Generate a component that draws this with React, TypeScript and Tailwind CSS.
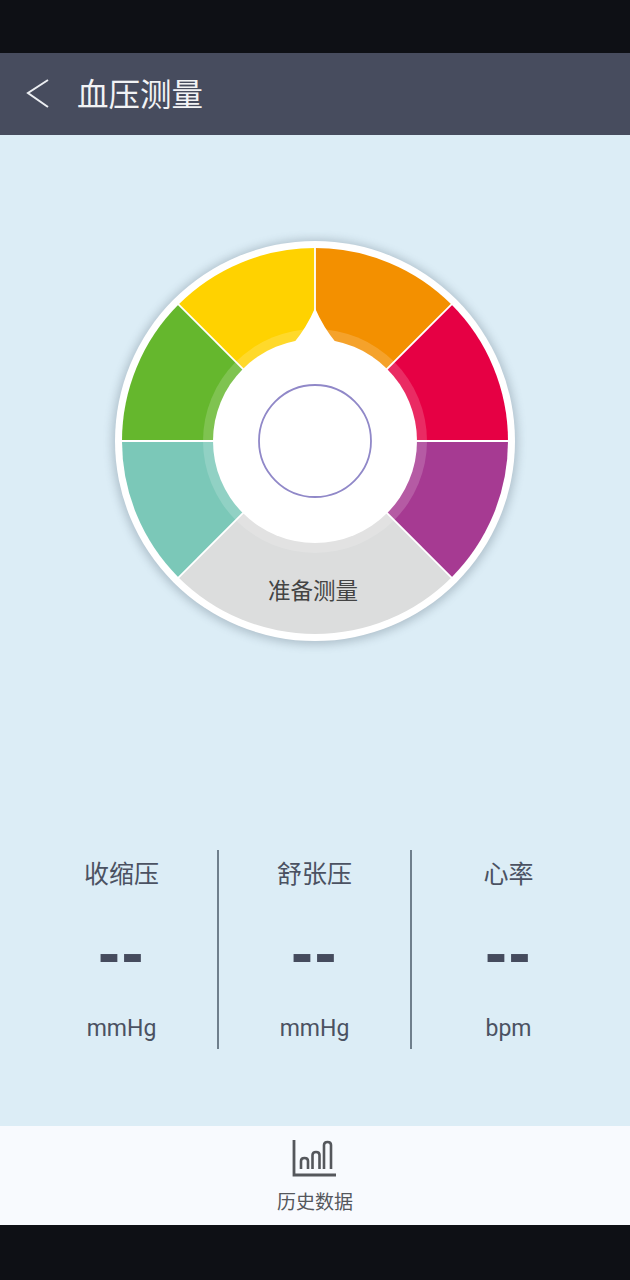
const CX = 200;
const CY = 200;

function pt(r: number, deg: number) {
  const a = ((deg - 90) * Math.PI) / 180;
  return `${(CX + r * Math.cos(a)).toFixed(2)} ${(CY + r * Math.sin(a)).toFixed(2)}`;
}

function wedge(from: number, to: number, r: number) {
  return `M${CX} ${CY} L${pt(r, from)} A${r} ${r} 0 0 1 ${pt(r, to)} Z`;
}

const wedges = [
  { from: 0, to: 45, color: "#f39000" },
  { from: 45, to: 90, color: "#e60044" },
  { from: 90, to: 135, color: "#a63a92" },
  { from: 135, to: 225, color: "#dcdddd" },
  { from: 225, to: 270, color: "#7bc8b8" },
  { from: 270, to: 315, color: "#65b72d" },
  { from: 315, to: 360, color: "#ffd200" },
];

function Wheel() {
  return (
    <div className="relative h-[400px] w-[400px] rounded-full bg-white shadow-[0_1px_9px_3px_rgba(90,110,125,0.33)]">
      <svg viewBox="0 0 400 400" className="block h-[400px] w-[400px]">
        {wedges.map((w) => (
          <path key={w.from} d={wedge(w.from, w.to, 193)} fill={w.color} />
        ))}
        {[0, 45, 90, 135, 225, 270, 315].map((d) => (
          <line
            key={d}
            x1={CX}
            y1={CY}
            x2={pt(197, d).split(" ")[0]}
            y2={pt(197, d).split(" ")[1]}
            stroke="#ffffff"
            strokeWidth="1.8"
          />
        ))}
        <circle cx={CX} cy={CY} r="112" fill="#ffffff" fillOpacity="0.17" />
        <circle cx={CX} cy={CY} r="102" fill="#ffffff" />
        <path d="M200 67 Q192 86 178 103 L222 103 Q208 86 200 67 Z" fill="#ffffff" />
        <circle cx={CX} cy={CY} r="56" fill="#ffffff" stroke="#9088c8" strokeWidth="1.8" />
      </svg>
      <div className="absolute left-0 right-0 top-[333px] pr-[4px] text-center text-[22.5px] font-normal leading-[30px] text-[#444444]">
        准备测量
      </div>
    </div>
  );
}

function Stat({ label, unit, divider }: { label: string; unit: string; divider?: boolean }) {
  return (
    <div className={`flex h-[199px] flex-col items-center ${divider ? "border-r-2 border-[#6f7f8c]" : ""}`}>
      <div className="mt-[4px] h-[36px] text-[25px] leading-[36px] text-[#4b5262]">{label}</div>
      <div className="mt-[27px] h-[70px] text-[66px] font-bold leading-[70px] tracking-[1.5px] text-[#454b5d] [font-family:'Liberation_Sans',sans-serif]">
        --
      </div>
      <div className="mt-[27px] text-[23px] leading-[30px] text-[#4b5262] [font-family:Roboto,sans-serif]">{unit}</div>
    </div>
  );
}

export default function App() {
  return (
    <div className="flex h-[1280px] w-[630px] flex-col bg-[#0e1015] [font-family:'Noto_Sans_CJK_SC','Noto_Sans',sans-serif]">
      <div className="h-[53px] shrink-0" />
      <header className="flex h-[82px] shrink-0 items-center bg-[#474c5e]">
        <svg width="26" height="32" viewBox="0 0 26 32" className="ml-[25px]" fill="none">
          <path d="M23 2 L3 15 L23 29" stroke="#eceef2" strokeWidth="2" />
        </svg>
        <h1 className="mb-[2px] ml-[26px] text-[31.5px] font-normal leading-none text-[#f2f3f5]">血压测量</h1>
      </header>
      <main className="flex h-[991px] shrink-0 flex-col items-center bg-[#dcedf6] pt-[106px]">
        <Wheel />
        <div className="mt-[209px] grid grid-cols-[193px_193px_193px] self-start pl-[26px]">
          <Stat label="收缩压" unit="mmHg" divider />
          <Stat label="舒张压" unit="mmHg" divider />
          <Stat label="心率" unit="bpm" />
        </div>
      </main>
      <footer className="flex h-[99px] shrink-0 flex-col items-center bg-[#f8fafe]">
        <svg width="46" height="40" viewBox="0 0 46 40" className="mt-[12px]" fill="none" stroke="#55575c">
          <path d="M2 2 V37 H44" strokeWidth="2.8" />
          <path d="M9 31 V23 Q9 20 12.500 20 Q16 20 16 23 V31" strokeWidth="2.6" />
          <path d="M20.500 31 V17 Q20.500 14 24 14 Q27.500 14 27.500 17 V31" strokeWidth="2.6" />
          <path d="M32 31 V7 Q32 4 35.500 4 Q39 4 39 7 V31" strokeWidth="2.6" />
        </svg>
        <div className="mt-[9px] text-[19px] leading-[28px] text-[#55575c]">历史数据</div>
      </footer>
    </div>
  );
}
